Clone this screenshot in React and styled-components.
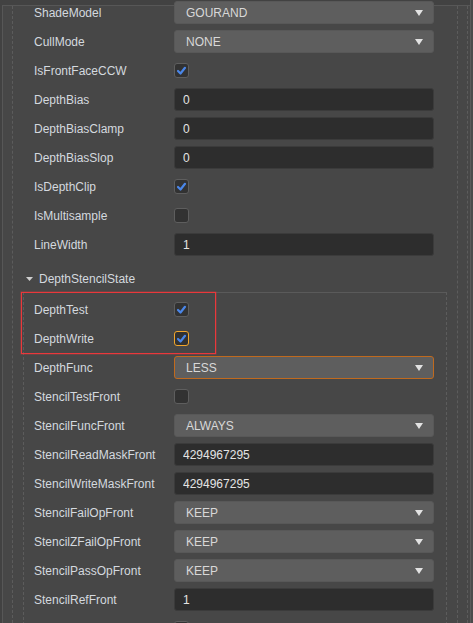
import styled, { createGlobalStyle } from 'styled-components';

const GlobalStyle = createGlobalStyle`
  html, body {
    margin: 0;
    padding: 0;
    background: #424242;
  }
  body {
    font-family: "Liberation Sans", Arial, sans-serif;
    font-size: 12px;
    overflow: hidden;
  }
`;

const Root = styled.div`
  display: flex;
  height: 623px;
  overflow: hidden;
  background: #424242;
`;

const Panel = styled.div`
  flex: 1;
  display: flex;
  margin: 5px 0 0 2px;
  border-top: 1px solid #575757;
  border-left: 1px solid #575757;
  background: #474747;
`;

const IndentGuide = styled.div`
  width: 10px;
  flex-shrink: 0;
  box-sizing: border-box;
  border-right: 1px dashed #5c5c5c;
`;

const Gutter = styled.div`
  width: 10px;
  margin-right: 2px;
  flex-shrink: 0;
  box-sizing: border-box;
  border-right: 1px dashed #5c5c5c;
`;

const Content = styled.div`
  flex: 1;
  min-width: 0;
  border-right: 1px dashed #5c5c5c;
`;

const Scrollbar = styled.div`
  width: 3px;
  flex-shrink: 0;
  background: #4b4b4b;
  border-left: 1px solid #5a5a5a;
`;

const Fields = styled.div`
  display: flex;
  flex-direction: column;
  gap: 6px;
  margin-top: -5px;
  padding: 0 23px 0 21px;
`;

const Row = styled.div`
  display: flex;
  align-items: center;
  height: 23px;
`;

const Label = styled.span`
  width: 140px;
  flex-shrink: 0;
  color: #d4d9df;
  white-space: nowrap;
`;

const Select = styled.div`
  width: 260px;
  height: 23px;
  box-sizing: border-box;
  display: flex;
  align-items: center;
  justify-content: space-between;
  padding: 0 10px 0 11px;
  background: #5e5e5e;
  border: 1px solid ${(p) => (p.$focused ? '#c06a1e' : '#585858')};
  border-radius: 3px;
  color: #d8d8d8;
`;

const Arrow = styled.svg`
  width: 8px;
  height: 6px;
  fill: #e2e2e2;
`;

const TextInput = styled.input`
  width: 260px;
  height: 23px;
  box-sizing: border-box;
  margin: 0;
  padding: 0 8px;
  background: #2d2d2d;
  border: 1px solid #3b3b3b;
  border-radius: 3px;
  color: #e4e4e4;
  font-family: inherit;
  font-size: 12px;
  outline: none;
`;

const Box = styled.span`
  width: 15px;
  height: 15px;
  box-sizing: border-box;
  display: flex;
  align-items: center;
  justify-content: center;
  background: #323232;
  border: 1px solid ${(p) => (p.$focused ? '#f2a62c' : '#5e5e5e')};
  border-radius: 3px;
`;

const Check = styled.svg`
  width: 11px;
  height: 11px;
  fill: none;
  stroke: #4a86e8;
  stroke-width: 2.2;
  stroke-linecap: round;
  stroke-linejoin: round;
`;

const Header = styled.div`
  display: flex;
  align-items: flex-end;
  gap: 6px;
  height: 24px;
  margin-left: -8px;
  line-height: 14px;
  color: #d4d9df;
`;

const Caret = styled.svg`
  width: 7px;
  height: 4px;
  margin-bottom: 5px;
  fill: #cfcfcf;
`;

const Group = styled.div`
  display: flex;
  flex-direction: column;
  gap: 6px;
  margin: 0 -13px 0 -11px;
  padding: 5px 12px 0 10px;
  border-top: 1px solid #5a5a5a;
  border-left: 1px dashed #5c5c5c;
  border-right: 1px dashed #5c5c5c;
`;

const Highlight = styled.div`
  position: relative;
  display: flex;
  flex-direction: column;
  gap: 6px;

  &::after {
    content: '';
    position: absolute;
    z-index: 1;
    top: -6px;
    bottom: -4px;
    left: -13px;
    width: 195px;
    box-sizing: border-box;
    border: 1px solid #ea383b;
    box-shadow: 0 0 0 0.5px rgba(234, 56, 59, 0.45);
    pointer-events: none;
  }
`;

const Dropdown = ({ value, focused }) => (
  <Select $focused={focused}>
    <span>{value}</span>
    <Arrow viewBox="0 0 8 6">
      <path d="M0 0 H8 L4 6 Z" />
    </Arrow>
  </Select>
);

const Checkbox = ({ checked, focused }) => (
  <Box $focused={focused}>
    {checked && (
      <Check viewBox="0 0 11 11">
        <path d="M2 6 L4.5 8.5 L9 2.8" />
      </Check>
    )}
  </Box>
);

const Field = ({ label, type, value, checked, focused }) => (
  <Row>
    <Label>{label}</Label>
    {type === 'select' && <Dropdown value={value} focused={focused} />}
    {type === 'input' && <TextInput readOnly defaultValue={value} />}
    {type === 'check' && <Checkbox checked={checked} focused={focused} />}
  </Row>
);

const rasterFields = [
  { label: 'ShadeModel', type: 'select', value: 'GOURAND' },
  { label: 'CullMode', type: 'select', value: 'NONE' },
  { label: 'IsFrontFaceCCW', type: 'check', checked: true },
  { label: 'DepthBias', type: 'input', value: '0' },
  { label: 'DepthBiasClamp', type: 'input', value: '0' },
  { label: 'DepthBiasSlop', type: 'input', value: '0' },
  { label: 'IsDepthClip', type: 'check', checked: true },
  { label: 'IsMultisample', type: 'check', checked: false },
  { label: 'LineWidth', type: 'input', value: '1' },
];

const stencilFields = [
  { label: 'DepthFunc', type: 'select', value: 'LESS', focused: true },
  { label: 'StencilTestFront', type: 'check', checked: false },
  { label: 'StencilFuncFront', type: 'select', value: 'ALWAYS' },
  { label: 'StencilReadMaskFront', type: 'input', value: '4294967295' },
  { label: 'StencilWriteMaskFront', type: 'input', value: '4294967295' },
  { label: 'StencilFailOpFront', type: 'select', value: 'KEEP' },
  { label: 'StencilZFailOpFront', type: 'select', value: 'KEEP' },
  { label: 'StencilPassOpFront', type: 'select', value: 'KEEP' },
  { label: 'StencilRefFront', type: 'input', value: '1' },
  { label: 'StencilTestBack', type: 'check', checked: false },
];

const App = () => (
  <Root>
    <GlobalStyle />
    <Panel>
      <IndentGuide />
      <Content>
        <Fields>
          {rasterFields.map((f) => (
            <Field key={f.label} {...f} />
          ))}
          <Header>
            <Caret viewBox="0 0 7 4">
              <path d="M0 0 H7 L3.5 4 Z" />
            </Caret>
            <span>DepthStencilState</span>
          </Header>
          <Group>
            <Highlight>
              <Field label="DepthTest" type="check" checked />
              <Field label="DepthWrite" type="check" checked focused />
            </Highlight>
            {stencilFields.map((f) => (
              <Field key={f.label} {...f} />
            ))}
          </Group>
        </Fields>
      </Content>
      <Gutter />
    </Panel>
    <Scrollbar />
  </Root>
);

export default App;
